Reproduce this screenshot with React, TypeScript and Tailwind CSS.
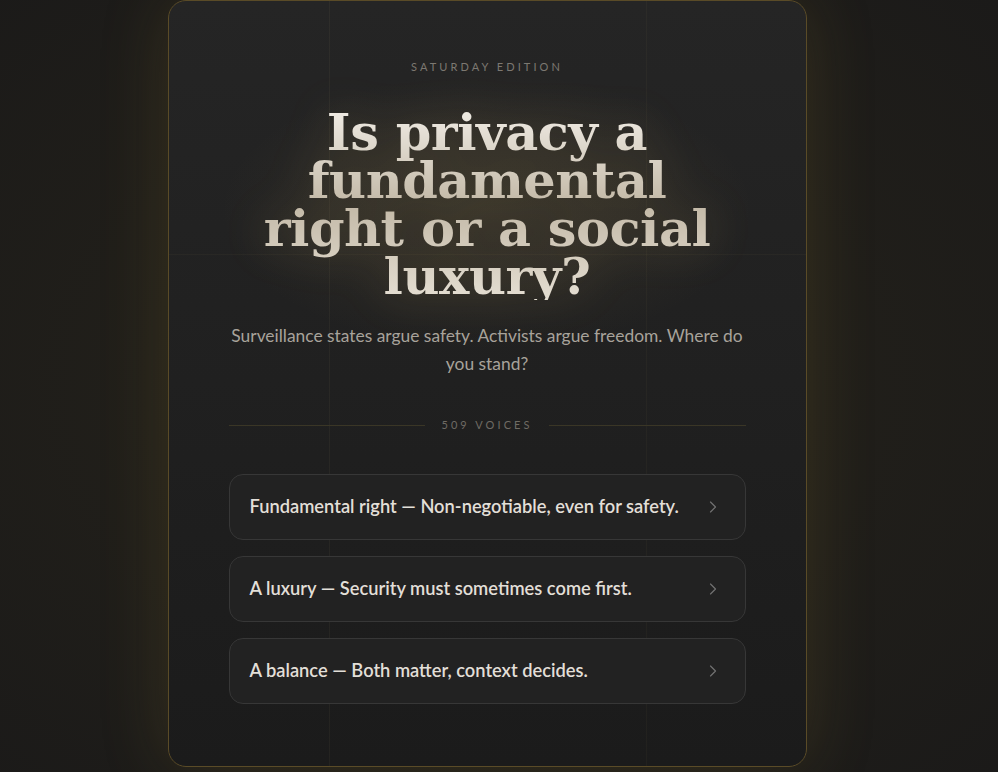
import React from 'react'
import { ChevronRight } from 'lucide-react'

const options = [
  'Fundamental right — Non-negotiable, even for safety.',
  'A luxury — Security must sometimes come first.',
  'A balance — Both matter, context decides.'
]

const sans = "font-['Segoe_UI','Lato','Noto_Sans',sans-serif]"

export default function App() {
  return (
    <div className="min-h-[772px] w-full overflow-hidden bg-[radial-gradient(ellipse_at_48%_50%,#2c281c_0%,#211f1a_45%,#1b1a19_100%)]">
      <div className="flex justify-center pr-[24px]">
        <div className="relative w-[639px] overflow-hidden rounded-[18px] border border-[#5a4b27] bg-gradient-to-b from-[#252525] to-[#1b1b1b] px-[60px] pb-[62px] pt-[58px] shadow-[0_0_70px_rgba(150,125,50,0.2)]">
          {/* decorative guide lines */}
          <div className="pointer-events-none absolute left-[160px] top-0 h-full w-px bg-[#d9c48a]/[0.05]" />
          <div className="pointer-events-none absolute left-[477px] top-0 h-full w-px bg-[#d9c48a]/[0.04]" />
          <div className="pointer-events-none absolute left-0 top-[253px] h-px w-full bg-[#d9c48a]/[0.04]" />
          <div className="pointer-events-none absolute left-1/2 top-[210px] h-[280px] w-[540px] -translate-x-1/2 -translate-y-1/2 rounded-full bg-[radial-gradient(ellipse_at_center,rgba(180,150,80,0.12),transparent_70%)]" />

          <div className="relative flex flex-col items-center">
            <div className={`${sans} text-[11px] leading-4 tracking-[0.28em] text-[#7c7871]`}>
              SATURDAY EDITION
            </div>

            <h1 className="mt-[33px] max-w-[500px] bg-gradient-to-b from-[#f0ece5] via-[#c3b9a7] to-[#e4ded2] bg-clip-text text-center font-['Georgia','DejaVu_Serif',serif] text-[51px] font-bold leading-[48px] tracking-[-0.01em] text-transparent drop-shadow-[0_0_22px_rgba(214,182,110,0.22)]">
              Is privacy a fundamental right or a social luxury?
            </h1>

            <p className={`${sans} mt-[22px] text-center text-[17.4px] leading-[28px] text-[#a8a39b]`}>
              Surveillance states argue safety. Activists argue freedom. Where do you stand?
            </p>

            <div className="mt-[39px] flex w-full items-center gap-4">
              <div className="h-px flex-1 bg-[#3a3626]" />
              <span className={`${sans} text-[11px] leading-4 tracking-[0.28em] text-[#6f6b64]`}>
                509 VOICES
              </span>
              <div className="h-px flex-1 bg-[#3a3626]" />
            </div>

            <div className="mt-[41px] flex w-full flex-col gap-4">
              {options.map((o) => (
                <button
                  key={o}
                  className="flex h-[66px] w-full items-center justify-between rounded-[14px] border border-[#373737] bg-[#222222] pl-5 pr-[22px] text-left"
                >
                  <span className={`${sans} text-[18.3px] font-semibold text-[#e2dfd8]`}>{o}</span>
                  <ChevronRight size={20} strokeWidth={1.4} className="text-[#727272]" />
                </button>
              ))}
            </div>
          </div>
        </div>
      </div>
    </div>
  )
}
